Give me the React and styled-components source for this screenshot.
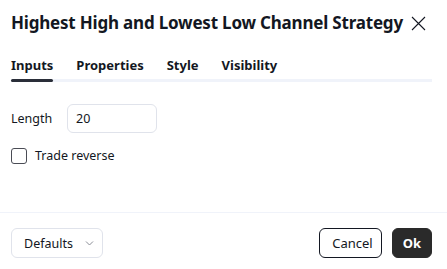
import React from 'react';
import styled, { createGlobalStyle } from 'styled-components';

const GlobalStyle = createGlobalStyle`
  html, body {
    margin: 0;
    padding: 0;
    background: #ffffff;
  }
  body {
    font-family: "Noto Sans", "Liberation Sans", sans-serif;
    color: #131722;
  }
`;

const Dialog = styled.div`
  width: 447px;
  height: 269px;
  display: flex;
  flex-direction: column;
  background: #fff;
  overflow: hidden;
`;

const Header = styled.div`
  display: flex;
  align-items: center;
  justify-content: space-between;
  padding: 10px 21px 0 11px;
  height: 26px;
`;

const Title = styled.h1`
  margin: 0;
  font-size: 17px;
  letter-spacing: -0.2px;
  font-weight: 700;
  line-height: 24px;
  white-space: nowrap;
  color: #131722;
`;

const CloseButton = styled.button`
  border: 0;
  background: none;
  padding: 0;
  width: 15px;
  height: 15px;
  display: flex;
  cursor: pointer;
`;

const Tabs = styled.div`
  display: flex;
  gap: 23px;
  margin: 20px 15px 0 11px;
  border-bottom: 3px solid #f0f3fa;
`;

const Tab = styled.div`
  position: relative;
  font-size: 13px;
  font-weight: 700;
  line-height: 18px;
  padding-bottom: 5px;
  color: #131722;

  ${({ active }) => active && `
    &:after {
      content: "";
      position: absolute;
      left: 0;
      right: 0;
      bottom: -3px;
      height: 3px;
      border-radius: 2px;
      background: #2a2e39;
    }
  `}
`;

const Body = styled.div`
  flex: 1;
  display: flex;
  flex-direction: column;
  gap: 14px;
  padding: 22px 11px 0;
`;

const Row = styled.div`
  display: flex;
  align-items: center;
  gap: ${({ gap }) => gap || 18}px;
  font-size: 12.5px;
`;

const Label = styled.span`
  width: 38px;
  color: #131722;
`;

const Input = styled.div`
  width: 90px;
  height: 29px;
  box-sizing: border-box;
  border: 1px solid #e0e3eb;
  border-radius: 6px;
  padding: 0 8px;
  display: flex;
  align-items: center;
  font-size: 12.5px;
`;

const Checkbox = styled.span`
  width: 16px;
  height: 16px;
  box-sizing: border-box;
  border: 1px solid #4a4c55;
  border-radius: 3px;
`;

const Footer = styled.div`
  display: flex;
  align-items: center;
  justify-content: space-between;
  border-top: 1px solid #f0f3fa;
  padding: 15px 15px 11px 11px;
`;

const Button = styled.button`
  height: 30px;
  box-sizing: border-box;
  border-radius: 6px;
  font-family: inherit;
  font-size: ${({ variant }) => (variant ? 13 : 12.5)}px;
  padding: 0 ${({ variant }) => (variant === 'primary' ? 10 : 8)}px 0 ${({ variant }) => (variant === 'primary' ? 10 : 12)}px;
  display: flex;
  align-items: center;
  gap: 12px;
  cursor: pointer;
  border: 1px solid ${({ variant }) => (variant === 'outline' ? '#131722' : variant === 'primary' ? '#2a2a2a' : '#e0e3eb')};
  background: ${({ variant }) => (variant === 'primary' ? '#2a2a2a' : '#fff')};
  color: ${({ variant }) => (variant === 'primary' ? '#fff' : '#131722')};
  font-weight: ${({ variant }) => (variant === 'primary' ? 700 : 400)};
`;

const Actions = styled.div`
  display: flex;
  gap: 10px;
`;

export default function App() {
  return (
    <Dialog>
      <GlobalStyle />
      <Header>
        <Title>Highest High and Lowest Low Channel Strategy</Title>
        <CloseButton>
          <svg width="15" height="15" viewBox="0 0 15 15" fill="none" stroke="#131722" strokeWidth="1.1">
            <path d="M1 1 L14 14 M14 1 L1 14" />
          </svg>
        </CloseButton>
      </Header>
      <Tabs>
        <Tab active>Inputs</Tab>
        <Tab>Properties</Tab>
        <Tab>Style</Tab>
        <Tab>Visibility</Tab>
      </Tabs>
      <Body>
        <Row>
          <Label>Length</Label>
          <Input>20</Input>
        </Row>
        <Row gap={8}>
          <Checkbox />
          <span>Trade reverse</span>
        </Row>
      </Body>
      <Footer>
        <Button>
          Defaults
          <svg width="9" height="5" viewBox="0 0 9 5" fill="none" stroke="#8a8d96" strokeWidth="1">
            <path d="M1 0.5 L4.5 4 L8 0.5" />
          </svg>
        </Button>
        <Actions>
          <Button variant="outline">Cancel</Button>
          <Button variant="primary">Ok</Button>
        </Actions>
      </Footer>
    </Dialog>
  );
}
